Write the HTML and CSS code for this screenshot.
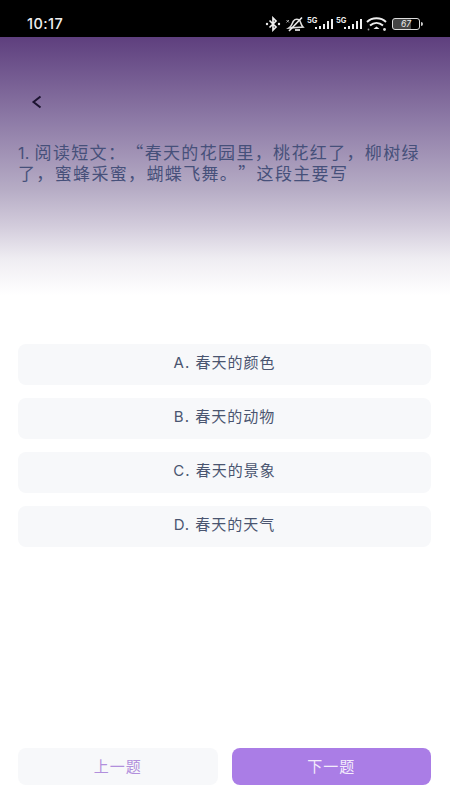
FILE: index.html
```html
<!DOCTYPE html>
<html lang="zh-CN">
  <head>
    <meta charset="UTF-8" />
    <meta name="viewport" content="width=device-width, initial-scale=1.0" />
    <title>阅读短文</title>
    <link rel="stylesheet" href="styles.css">
  </head>
  <body>
    <div class="page">
      <!-- status bar -->
      <div class="statusbar">
        <span class="time">10:17</span>
        <div class="status-icons">
          <svg class="ic-bt" viewBox="0 0 16 16" width="16" height="16">
            <path d="M4.500 4.500 L11 11 L8 14 V2 L11 5 L4.500 11.500" fill="none" stroke="#eee" stroke-width="1.700"/>
            <circle cx="2" cy="8" r="1.200" fill="#eee"/>
            <circle cx="14" cy="8" r="1.200" fill="#eee"/>
          </svg>
          <svg class="ic-mute" viewBox="0 0 19 16" width="19" height="16">
            <path d="M3 12 C6 10 6 7 7.500 5 C9.500 2.500 12.500 3 14 5 C15 7 15 9 17 11 Z" fill="none" stroke="#ddd" stroke-width="1.600"/>
            <path d="M3 15 L16 1.500" stroke="#eee" stroke-width="1.600"/>
            <path d="M9 14 H14" stroke="#ddd" stroke-width="1.800"/>
            <path d="M0.500 4 L3 6.500 M0.500 6.500 L3 4" stroke="#bbb" stroke-width="0.900"/>
          </svg>
          <div class="signal">
            <span class="net">5G</span>
            <i class="b1"></i><i class="b2"></i><i class="b3"></i><i class="b4"></i><i class="b5"></i>
          </div>
          <div class="signal">
            <span class="net">5G</span>
            <i class="b1"></i><i class="b2"></i><i class="b3"></i><i class="b4"></i><i class="b5"></i>
          </div>
          <svg class="ic-wifi" viewBox="0 0 21 14" width="21" height="14">
            <path d="M1 5 C6 0 15 0 20 5" fill="none" stroke="#eee" stroke-width="1.900"/>
            <path d="M4 8.500 C8 5 13 5 17 8.500" fill="none" stroke="#eee" stroke-width="1.900"/>
            <path d="M7.500 12 L10.500 9.500 L13.500 12 Z" fill="#eee"/>
            <circle cx="18.500" cy="12.500" r="1.400" fill="#ddd"/>
            <circle cx="2.500" cy="12.500" r="0.900" fill="#999"/>
          </svg>
          <div class="battery"><span>67</span></div>
          <i class="battery-tip"></i>
        </div>
      </div>

      <!-- question header -->
      <div class="hero">
        <svg class="back" viewBox="0 0 12 14" width="12" height="14">
          <path d="M9.500 1.500 L2.500 7 L9.500 12.500" fill="none" stroke="#1c1430" stroke-width="2"/>
        </svg>
        <p class="question"><span class="num">1. </span>阅读短文：“春天的花园里，桃花红了，柳树绿了，蜜蜂采蜜，蝴蝶飞舞。”这段主要写</p>
      </div>

      <!-- options -->
      <ul class="options">
        <li class="option">A. 春天的颜色</li>
        <li class="option">B. 春天的动物</li>
        <li class="option">C. 春天的景象</li>
        <li class="option">D. 春天的天气</li>
      </ul>

      <!-- bottom buttons -->
      <div class="actions">
        <button class="btn btn-prev">上一题</button>
        <button class="btn btn-next">下一题</button>
      </div>
    </div>
  </body>
</html>
```

FILE: styles.css
```css
*{
    padding:0;
    margin:0;
    box-sizing:border-box;
}
body{
    background:#fff;
    font-family:"Inter","Noto Sans CJK SC",sans-serif;
}
.page{
    width:450px;
    height:800px;
    display:flex;
    flex-direction:column;
    overflow:hidden;
}
.statusbar{
    height:37px;
    background:#000;
    display:flex;
    align-items:center;
    justify-content:space-between;
    padding:10px 27px 0 27px;
    color:#eee;
}
.time{
    font-size:14.5px;
    font-weight:500;
    letter-spacing:.4px;
}
.status-icons{
    display:flex;
    align-items:center;
    gap:3px;
}
.ic-mute{
    margin-left:2px;
    margin-right:-1px;
}
.signal{
    position:relative;
    width:26px;
    height:11px;
    display:flex;
    align-items:flex-end;
    justify-content:flex-end;
    gap:1.500px;
}
.signal i{
    display:block;
    width:2.500px;
    background:#eee;
}
.signal .b1{height:2px;}
.signal .b2{height:3px;}
.signal .b3{height:5px;}
.signal .b4{height:8px;}
.signal .b5{height:10px;}
.net{
    position:absolute;
    left:0;
    top:-2px;
    font-size:7.500px;
    font-weight:700;
    color:#eee;
}
.ic-wifi{
    margin-left:1px;
}
.battery{
    width:28px;
    height:12px;
    margin-left:2px;
    border:1.500px solid #ddd;
    border-radius:3px;
    background:linear-gradient(to right,#444 70%,transparent 70%);
    display:flex;
    align-items:center;
    justify-content:center;
    font-size:8.500px;
    color:#eee;
    font-style:italic;
}
.battery-tip{
    display:block;
    width:2px;
    height:4px;
    margin-left:-2px;
    border-radius:0 2px 2px 0;
    background:#ccc;
}
.hero{
    height:258px;
    background:linear-gradient(to bottom,#5e3f7e 0%,#8d7aa6 32%,#b6acc5 59%,#d2cbdb 73%,#efedf2 86%,#fff 100%);
    padding:58px 18px 0 18px;
}
.back{
    display:block;
    margin-left:13px;
}
.question{
    margin-top:32px;
    font-family:"Noto Sans CJK SC",sans-serif;
    font-size:17px;
    line-height:21px;
    letter-spacing:1.350px;
    text-spacing-trim:space-all;
    color:#46507a;
}
.num{
    font-family:"Inter",sans-serif;
    font-size:16px;
    line-height:1;
    letter-spacing:.3px;
}
.options{
    list-style:none;
    margin-top:49px;
    padding:0 19px 0 18px;
    display:flex;
    flex-direction:column;
    gap:13px;
}
.option{
    height:41px;
    padding-bottom:6px;
    background:#f7f8fa;
    border-radius:8px;
    display:flex;
    align-items:center;
    justify-content:center;
    font-size:15px;
    letter-spacing:1px;
    color:#4a5570;
}
.actions{
    margin-top:auto;
    margin-bottom:15px;
    padding:0 19px 0 18px;
    display:flex;
    gap:14px;
}
.btn{
    flex:1;
    height:37px;
    padding-bottom:2px;
    border:none;
    border-radius:8px;
    font-family:inherit;
    font-size:15px;
    letter-spacing:1px;
}
.btn-prev{
    background:#f7f8fa;
    color:#b18fdc;
}
.btn-next{
    background:#aa7de6;
    color:#f3ecfb;
}
```
